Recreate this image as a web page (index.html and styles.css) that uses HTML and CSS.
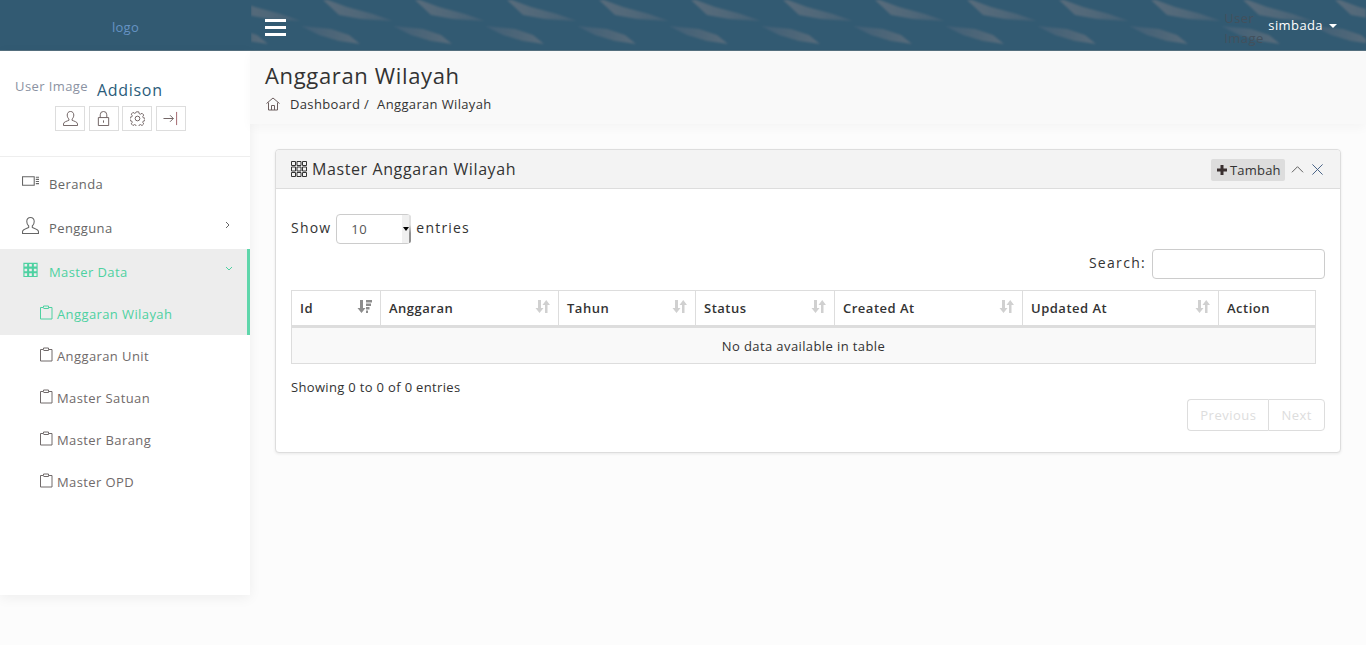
FILE: index.html
```html
<!DOCTYPE html>
<html lang="id">
<head>
    <meta charset="UTF-8">
    <meta name="viewport" content="width=device-width, initial-scale=1.0">
    <title>Anggaran Wilayah</title>
    <link rel="stylesheet" href="styles.css">
</head>
<body>
    <header class="topbar">
        <div class="brand">logo</div>
        <div class="topnav">
            <svg class="topnav-bg" aria-hidden="true">
                <defs>
                    <linearGradient id="fade-up" x1="0" x2="1" y1="0" y2="0">
                        <stop offset="0" stop-color="#6a7480" />
                        <stop offset="0.45" stop-color="#5f6f7d" />
                        <stop offset="1" stop-color="#4a6478" />
                    </linearGradient>
                    <linearGradient id="fade-low" x1="0" x2="1" y1="0" y2="0">
                        <stop offset="0" stop-color="#46627a" />
                        <stop offset="0.6" stop-color="#5a6c7b" />
                        <stop offset="1" stop-color="#6a7480" />
                    </linearGradient>
                    <pattern id="streaks" width="92" height="50" patternUnits="userSpaceOnUse" x="50">
                        <path fill="url(#fade-up)" d="M22 0 L27 0 L46 7 L72 14 L92 21 L60 19 L38 15 Z" />
                        <path fill="url(#fade-up)" d="M-70 0 L-65 0 L-46 7 L-20 14 L0 21 L-32 19 L-54 15 Z" />
                        <path fill="url(#fade-low)" d="M0 26 L30 29 L48 35 L59 44 L38 41 L18 35 Z" />
                        <path fill="url(#fade-low)" d="M92 26 L122 29 L140 35 L151 44 L130 41 L110 35 Z" />
                    </pattern>
                </defs>
                <rect width="100%" height="100%" fill="url(#streaks)" />
            </svg>
            <button class="burger" aria-label="Menu"><span></span><span></span><span></span></button>
            <div class="usernav">
                <span class="usernav-img">User Image</span>
                <span class="usernav-name">simbada</span>
                <span class="caret"></span>
            </div>
        </div>
    </header>

    <div class="layout">
        <aside class="sidebar">
            <div class="profile">
                <div class="profile-top">
                    <span class="profile-img">User Image</span>
                    <span class="profile-name">Addison</span>
                </div>
                <div class="profile-actions">
                    <a class="mini-btn"><svg viewBox="0 0 16 16"><use href="#i-user" /></svg></a>
                    <a class="mini-btn"><svg viewBox="0 0 16 16"><path d="M2.500 7h11v8.500h-11z M4.500 7V4a3.500 3.500 0 0 1 7 0v3 M8 10v2.500" /></svg></a>
                    <a class="mini-btn"><svg viewBox="0 0 16 16"><path d="M6.600.5h2.800l.4 2 1.500.7 1.800-1.100 1.900 2-1.100 1.700.6 1.500 2 .4v2.600l-2 .5-.6 1.500 1.100 1.700-1.900 1.900-1.800-1.100-1.500.7-.4 1.900H6.600l-.4-1.900-1.500-.7-1.800 1.100-1.900-1.900 1.100-1.700-.6-1.500-2-.5V6.700l2-.4.6-1.500-1.100-1.700 1.900-2 1.800 1.100 1.500-.7z" transform="translate(.4 .4) scale(.95)" /><circle cx="8" cy="8" r="2.500" /></svg></a>
                    <a class="mini-btn"><svg viewBox="0 0 16 16"><path d="M.5 8h10.500 M7.500 4.500 11 8l-3.500 3.500" /><path class="red-line" d="M14.500 1v14" /></svg></a>
                </div>
            </div>

            <svg class="icon-defs" aria-hidden="true">
                <defs>
                    <g id="i-user"><path d="M8 .5c-2.200 0-3.500 1.700-3.500 3.800 0 1.700.7 3.300 1.800 4.200v1.400C4.600 10.800.5 11.500.5 13.800v1.700h15v-1.700c0-2.300-4.100-3-5.800-3.900V8.500c1.100-.9 1.800-2.500 1.800-4.200C11.500 2.200 10.200.5 8 .5z" /></g>
                    <g id="i-clip"><path d="M1.500 2.500H4.500V1h5v1.500h3.500V14H1.500z M4.500 3.500h5V2.500" /></g>
                </defs>
            </svg>

            <nav class="menu">
                <a class="menu-item">
                    <svg class="menu-icon" viewBox="0 0 16 16"><path d="M.5 3.500h11v8H.5z M13 4h3 M13 6h3 M13 8h3 M13 10h3" /></svg>
                    <span>Beranda</span>
                </a>
                <a class="menu-item">
                    <svg class="menu-icon" viewBox="0 0 16 16"><use href="#i-user" /></svg>
                    <span>Pengguna</span>
                    <svg class="menu-arrow" viewBox="0 0 8 8"><path d="M2 1 5 4 2 7" /></svg>
                </a>
                <div class="menu-group">
                    <a class="menu-item">
                        <svg class="menu-icon grid-icon" viewBox="0 0 16 16"><path d="M1 1.500h4v4H1z M6 1.500h4v4H6z M11 1.500h4v4h-4z M1 6.500h4v4H1z M6 6.500h4v4H6z M11 6.500h4v4h-4z M1 11.500h4v4H1z M6 11.500h4v4H6z M11 11.500h4v4h-4z" /></svg>
                        <span>Master Data</span>
                        <svg class="menu-arrow" viewBox="0 0 8 8"><path d="M1 2 4 5 7 2" /></svg>
                    </a>
                    <a class="sub-item">
                        <svg class="clip-icon" viewBox="0 0 15 15"><use href="#i-clip" /></svg>
                        <span>Anggaran Wilayah</span>
                    </a>
                </div>
                <a class="sub-item"><svg class="clip-icon" viewBox="0 0 15 15"><use href="#i-clip" /></svg><span>Anggaran Unit</span></a>
                <a class="sub-item"><svg class="clip-icon" viewBox="0 0 15 15"><use href="#i-clip" /></svg><span>Master Satuan</span></a>
                <a class="sub-item"><svg class="clip-icon" viewBox="0 0 15 15"><use href="#i-clip" /></svg><span>Master Barang</span></a>
                <a class="sub-item"><svg class="clip-icon" viewBox="0 0 15 15"><use href="#i-clip" /></svg><span>Master OPD</span></a>
            </nav>
        </aside>

        <main class="content">
            <div class="page-head">
                <h1>Anggaran Wilayah</h1>
                <div class="crumbs">
                    <svg class="home-icon" viewBox="0 0 14 14"><path d="M.5 6.500 7 1l6.500 5.500 M2.500 5.500V13h9V5.500 M5.500 13V8.500h3V13" /></svg>
                    <span class="crumb-link">Dashboard /</span>
                    <span>Anggaran Wilayah</span>
                </div>
            </div>

            <section class="panel">
                <div class="panel-head">
                    <svg class="panel-icon" viewBox="0 0 16 16"><path d="M.5.500h4v4h-4z M6 .500h4v4H6z M11.500.500h4v4h-4z M.5 6h4v4h-4z M6 6h4v4H6z M11.500 6h4v4h-4z M.5 11.500h4v4h-4z M6 11.500h4v4H6z M11.500 11.500h4v4h-4z" /></svg>
                    <h2>Master Anggaran Wilayah</h2>
                    <div class="panel-tools">
                        <a class="btn-add"><svg class="plus" viewBox="0 0 10 10"><path d="M5 0v10 M0 5h10" /></svg>Tambah</a>
                        <svg class="tool" viewBox="0 0 14 14"><path d="M1 10 7 4l6 6" /></svg>
                        <svg class="tool tool-close" viewBox="0 0 14 14"><path d="M1.500 1.500l11 11 M12.500 1.500l-11 11" /></svg>
                    </div>
                </div>
                <div class="panel-body">
                    <div class="dt-length">
                        <label>Show</label>
                        <span class="select-wrap">
                            <select class="dt-select"><option>10</option><option>25</option><option>50</option></select>
                            <span class="select-arrow"></span>
                        </span>
                        <label>entries</label>
                    </div>
                    <div class="dt-search">
                        <label>Search:</label>
                        <input class="dt-input" type="search">
                    </div>
                    <table class="dt-table">
                        <thead>
                            <tr>
                                <th class="col-id">Id <svg class="sort sort-on" viewBox="0 0 15 15"><use href="#s-desc" /></svg></th>
                                <th class="col-ang">Anggaran <svg class="sort" viewBox="0 0 15 15"><use href="#s-both" /></svg></th>
                                <th class="col-thn">Tahun <svg class="sort" viewBox="0 0 15 15"><use href="#s-both" /></svg></th>
                                <th class="col-sta">Status <svg class="sort" viewBox="0 0 15 15"><use href="#s-both" /></svg></th>
                                <th class="col-cre">Created At <svg class="sort" viewBox="0 0 15 15"><use href="#s-both" /></svg></th>
                                <th class="col-upd">Updated At <svg class="sort" viewBox="0 0 15 15"><use href="#s-both" /></svg></th>
                                <th>Action</th>
                            </tr>
                        </thead>
                        <tbody>
                            <tr><td colspan="7">No data available in table</td></tr>
                        </tbody>
                    </table>
                    <div class="dt-info">Showing 0 to 0 of 0 entries</div>
                    <div class="dt-paging">
                        <a class="page-btn">Previous</a>
                        <a class="page-btn">Next</a>
                    </div>
                </div>
            </section>

            <svg class="icon-defs" aria-hidden="true">
                <defs>
                    <g id="s-both">
                        <path d="M3 1h3v8h2.500L4.500 14 .5 9H3z" />
                        <path class="sort-up" d="M10 14h2.500V6H15l-3.750-5L7.500 6H10z" />
                    </g>
                    <g id="s-desc">
                        <path d="M3 1h3v8h2.500L4.500 14 .5 9H3z" />
                        <path d="M9 1h6v2.500H9z M9 4.500h5V7H9z M9 8h3.500v2.500H9z M9 11.500h2V14H9z" />
                    </g>
                </defs>
            </svg>
        </main>
    </div>
</body>
</html>
```

FILE: styles.css
```css
* {
    box-sizing: border-box;
}
body {
    font-family: "Open Sans", sans-serif;
    font-size: 13px;
    letter-spacing: 0.4px;
    color: #333;
    background-color: #fcfcfc;
    margin: 0;
    height: 645px;
    overflow: hidden;
}
svg {
    fill: none;
    stroke: currentColor;
    stroke-width: 1;
}
.icon-defs {
    display: block;
    width: 0;
    height: 0;
}

/* topbar */
.topbar {
    display: flex;
    height: 51px;
    background-color: #325a72;
    border-bottom: 1px solid #55707f;
}
.brand {
    width: 251px;
    text-align: center;
    padding-top: 18px;
    color: #6693c4;
    letter-spacing: 0.3px;
}
.topnav {
    flex: 1;
    position: relative;
    display: flex;
    align-items: center;
    justify-content: space-between;
    padding: 0 29px 0 14px;
    overflow: hidden;
}
.topnav-bg {
    position: absolute;
    left: 0;
    top: 0;
    width: 100%;
    height: 100%;
    stroke: none;
    opacity: 0.7;
    filter: blur(0.8px);
}
.burger {
    position: relative;
    display: flex;
    flex-direction: column;
    gap: 4px;
    width: 21px;
    padding: 0;
    margin-top: 4px;
    border: 0;
    background: none;
}
.burger span {
    display: block;
    height: 3px;
    background-color: #fff;
}
.usernav {
    position: relative;
    display: flex;
    align-items: center;
}
.usernav-img {
    width: 44px;
    line-height: 20px;
    color: #43505c;
    font-size: 13px;
    margin-top: 6px;
}
.usernav-name {
    color: #fff;
    font-size: 13px;
    letter-spacing: 0.4px;
}
.caret {
    width: 0;
    height: 0;
    margin-left: 6px;
    margin-top: 2px;
    border-top: 4px solid #fff;
    border-left: 4px solid transparent;
    border-right: 4px solid transparent;
}

/* sidebar */
.layout {
    display: flex;
    align-items: flex-start;
}
.sidebar {
    width: 250px;
    height: 544px;
    flex-shrink: 0;
    background-color: #fff;
    box-shadow: 0 3px 12px rgba(0, 0, 0, 0.06);
}
.profile {
    height: 106px;
    border-bottom: 1px solid #eee;
    padding: 26px 0 0 15px;
}
.profile-top {
    display: flex;
    align-items: flex-start;
    height: 29px;
}
.profile-img {
    color: #8b92a2;
    font-size: 13px;
    letter-spacing: 0.4px;
    width: 82px;
}
.profile-name {
    font-size: 16px;
    color: #2b5c7a;
    margin-top: 2px;
    letter-spacing: 0.7px;
}
.profile-actions {
    display: flex;
    gap: 3.5px;
    margin-left: 40px;
}
.mini-btn {
    width: 30px;
    height: 25px;
    display: flex;
    align-items: center;
    justify-content: center;
    border: 1px solid #ddd;
    color: #6b5d5d;
}
.mini-btn svg {
    width: 15px;
    height: 15px;
}
.mini-btn .red-line {
    stroke: #a06068;
}
.menu {
    display: block;
    margin-top: 4px;
}
.menu-item {
    display: flex;
    align-items: center;
    height: 44px;
    padding: 2px 0 0 22px;
    color: #666;
    position: relative;
}
.menu-icon {
    width: 17px;
    height: 17px;
    margin-right: 10px;
    margin-top: -5px;
    color: #666;
}
.menu-arrow {
    position: absolute;
    right: 18px;
    top: 16px;
    width: 8px;
    height: 8px;
}
.menu-group {
    background-color: #ededed;
    border-right: 3px solid #5fd6ab;
}
.menu-group .menu-item,
.menu-group .menu-icon,
.menu-group .sub-item {
    color: #4dd1a1;
}
.grid-icon {
    width: 15px;
    height: 15px;
    margin: -5px 11px 0 1px;
    stroke-width: 1.2;
}
.menu-group .menu-arrow {
    right: 14px;
}
.sub-item {
    display: flex;
    align-items: center;
    height: 42px;
    padding-left: 39px;
    color: #706a6a;
}
.clip-icon {
    width: 15px;
    height: 15px;
    margin-right: 3px;
    margin-top: -3px;
}

/* content */
.content {
    flex: 1;
    min-width: 0;
}
.page-head {
    height: 73px;
    padding: 9px 0 0 15px;
    background-color: #f9f9f9;
    box-shadow: 0 4px 10px rgba(0, 0, 0, 0.03);
}
h1 {
    margin: 0;
    font-size: 22px;
    font-weight: 400;
    line-height: 30px;
    color: #333;
    letter-spacing: 0.65px;
}
.crumbs {
    display: flex;
    align-items: center;
    margin-top: 3px;
    line-height: 22px;
    letter-spacing: 0.35px;
}
.home-icon {
    width: 14px;
    height: 14px;
    margin: 0 10px 0 1px;
    color: #6b5d5d;
}
.crumb-link {
    margin-right: 8px;
}
.panel {
    margin: 25px 25px 0 25px;
    height: 304px;
    background-color: #fff;
    border: 1px solid #ddd;
    border-radius: 4px;
    box-shadow: 0 1px 3px rgba(0, 0, 0, 0.08);
}
.panel-head {
    display: flex;
    align-items: center;
    height: 39px;
    padding: 0 15px;
    background-color: #f3f3f3;
    border-bottom: 1px solid #ddd;
    border-radius: 4px 4px 0 0;
}
.panel-icon {
    width: 16px;
    height: 16px;
    margin-right: 5px;
}
h2 {
    margin: 0;
    font-size: 16px;
    font-weight: 400;
    letter-spacing: 0.6px;
}
.panel-tools {
    margin-left: auto;
    display: flex;
    align-items: center;
}
.btn-add {
    display: flex;
    align-items: center;
    background-color: #ddd;
    border-radius: 2px;
    height: 22px;
    width: 74px;
    padding-left: 6px;
    margin: 2px 6px 0 0;
    letter-spacing: 0.2px;
}
.plus {
    width: 10px;
    height: 10px;
    margin-right: 3px;
    stroke-width: 3;
    color: #3a3030;
}
.tool {
    width: 13px;
    height: 13px;
    margin-right: 7px;
    color: #555;
}
.tool-close {
    color: #3d5a80;
    margin-right: 1px;
}
.panel-body {
    padding: 25px 15px 0 15px;
}
.dt-length {
    display: flex;
    align-items: center;
    gap: 5px;
    height: 30px;
    font-size: 14px;
    letter-spacing: 1.2px;
}
.dt-length label,
.dt-search label {
    margin-top: -3px;
}
.select-wrap {
    position: relative;
    display: block;
    width: 75px;
    height: 30px;
}
.dt-select {
    appearance: none;
    width: 75px;
    height: 30px;
    padding: 0 14px;
    font-family: inherit;
    font-size: 13px;
    letter-spacing: 0.4px;
    color: #555;
    background-color: #fff;
    border: 1px solid #ccc;
    border-radius: 4px;
}
.select-arrow {
    position: absolute;
    right: 0;
    top: 1px;
    bottom: 1px;
    width: 9px;
    background-color: #f0f0f0;
    border-radius: 0 3px 3px 0;
}
.select-arrow::before {
    content: "";
    position: absolute;
    right: 0;
    top: 0;
    bottom: 0;
    width: 2px;
    border-radius: 0 3px 3px 0;
    background: linear-gradient(to bottom, #e0e0e0 35%, #909090 65%);
}
.select-arrow::after {
    content: "";
    position: absolute;
    left: 1px;
    top: 12px;
    border-top: 4px solid #000;
    border-left: 3px solid transparent;
    border-right: 3px solid transparent;
}
.dt-search {
    display: flex;
    align-items: center;
    justify-content: flex-end;
    gap: 6px;
    margin-top: 5px;
    font-size: 14px;
    letter-spacing: 1.3px;
}
.dt-input {
    width: 173px;
    height: 30px;
    background-color: #fff;
    border: 1px solid #ccc;
    border-radius: 4px;
}
.dt-table {
    width: 1025px;
    margin-top: 11px;
    border-collapse: collapse;
    table-layout: fixed;
}
.dt-table th {
    position: relative;
    height: 36px;
    padding: 0 8px;
    text-align: left;
    font-weight: 600;
    letter-spacing: 0.5px;
    color: #333;
    background-color: #fff;
    border: 1px solid #ddd;
    border-bottom: 3px solid #ddd;
}
.dt-table td {
    height: 37px;
    text-align: center;
    background-color: #f9f9f9;
    border: 1px solid #ddd;
}
.col-id { width: 89px; }
.col-ang { width: 178px; }
.col-thn { width: 137px; }
.col-sta { width: 139px; }
.col-cre { width: 188px; }
.col-upd { width: 196px; }
.sort {
    position: absolute;
    right: 8px;
    top: 8px;
    width: 15px;
    height: 15px;
    stroke: none;
    fill: #d0d0d0;
}
.sort .sort-up {
    fill: #e2e7ec;
}
.sort-on {
    fill: #8c8c8c;
}
.dt-info {
    margin-top: 14px;
    letter-spacing: 0.33px;
}
.dt-paging {
    display: flex;
    justify-content: flex-end;
    margin-top: 3px;
}
.page-btn {
    height: 32px;
    line-height: 30px;
    padding: 0 12px;
    color: #ddd;
    border: 1px solid #ddd;
    letter-spacing: 0.5px;
}
.page-btn:first-child {
    border-radius: 4px 0 0 4px;
    border-right: 0;
}
.page-btn:last-child {
    border-radius: 0 4px 4px 0;
}
```
